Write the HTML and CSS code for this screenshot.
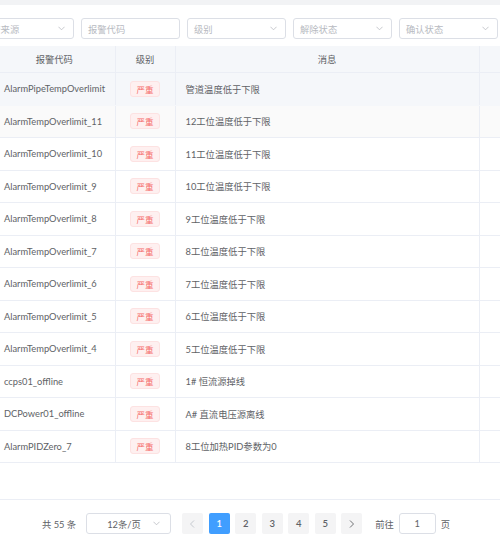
FILE: index.html
```html
<!DOCTYPE html>
<html lang="zh-CN">
<head>
    <meta charset="utf-8">
    <link rel="stylesheet" href="styles.css">
</head>
<body>
<div class="topbar"></div>

<div class="filters">
    <div class="field"><span class="ph">报警来源</span><svg class="chev" viewBox="0 0 8 5"><path d="M0.5 0.5L4 4L7.5 0.5"/></svg></div>
    <div class="field"><span class="ph">报警代码</span></div>
    <div class="field"><span class="ph">级别</span><svg class="chev" viewBox="0 0 8 5"><path d="M0.5 0.5L4 4L7.5 0.5"/></svg></div>
    <div class="field"><span class="ph">解除状态</span><svg class="chev" viewBox="0 0 8 5"><path d="M0.5 0.5L4 4L7.5 0.5"/></svg></div>
    <div class="field"><span class="ph">确认状态</span><svg class="chev" viewBox="0 0 8 5"><path d="M0.5 0.5L4 4L7.5 0.5"/></svg></div>
</div>

<div class="tablewrap">
    <table class="alarms">
        <colgroup>
            <col class="c-code">
            <col class="c-level">
            <col class="c-msg">
            <col class="c-op">
        </colgroup>
        <thead>
        <tr><th>报警代码</th><th>级别</th><th>消息</th><th>操作</th></tr>
        </thead>
        <tbody>
        <tr class="hover"><td>AlarmPipeTempOverlimit</td><td class="mid"><span class="tag">严重</span></td><td>管道温度低于下限</td><td></td></tr>
        <tr class="stripe"><td>AlarmTempOverlimit_11</td><td class="mid"><span class="tag">严重</span></td><td>12工位温度低于下限</td><td></td></tr>
        <tr><td>AlarmTempOverlimit_10</td><td class="mid"><span class="tag">严重</span></td><td>11工位温度低于下限</td><td></td></tr>
        <tr><td>AlarmTempOverlimit_9</td><td class="mid"><span class="tag">严重</span></td><td>10工位温度低于下限</td><td></td></tr>
        <tr><td>AlarmTempOverlimit_8</td><td class="mid"><span class="tag">严重</span></td><td>9工位温度低于下限</td><td></td></tr>
        <tr><td>AlarmTempOverlimit_7</td><td class="mid"><span class="tag">严重</span></td><td>8工位温度低于下限</td><td></td></tr>
        <tr><td>AlarmTempOverlimit_6</td><td class="mid"><span class="tag">严重</span></td><td>7工位温度低于下限</td><td></td></tr>
        <tr><td>AlarmTempOverlimit_5</td><td class="mid"><span class="tag">严重</span></td><td>6工位温度低于下限</td><td></td></tr>
        <tr><td>AlarmTempOverlimit_4</td><td class="mid"><span class="tag">严重</span></td><td>5工位温度低于下限</td><td></td></tr>
        <tr><td>ccps01_offline</td><td class="mid"><span class="tag">严重</span></td><td>1# 恒流源掉线</td><td></td></tr>
        <tr><td>DCPower01_offline</td><td class="mid"><span class="tag">严重</span></td><td>A# 直流电压源离线</td><td></td></tr>
        <tr><td>AlarmPIDZero_7</td><td class="mid"><span class="tag">严重</span></td><td>8工位加热PID参数为0</td><td></td></tr>
        </tbody>
    </table>
</div>

<div class="pager">
    <span class="total">共 55 条</span>
    <div class="sizes"><span>12条/页</span><svg class="chev" viewBox="0 0 8 5"><path d="M0.5 0.5L4 4L7.5 0.5"/></svg></div>
    <div class="pages">
        <button class="pbtn disabled"><svg class="arrow" viewBox="0 0 5 8"><path d="M4 0.5L0.5 4L4 7.5"/></svg></button>
        <button class="pbtn active">1</button>
        <button class="pbtn">2</button>
        <button class="pbtn">3</button>
        <button class="pbtn">4</button>
        <button class="pbtn">5</button>
        <button class="pbtn"><svg class="arrow" viewBox="0 0 5 8"><path d="M1 0.5L4.5 4L1 7.5"/></svg></button>
    </div>
    <span class="jump">前往</span>
    <div class="goto">1</div>
    <span class="unit">页</span>
</div>
</body>
</html>
```

FILE: styles.css
```css
html, body {
    margin: 0;
    padding: 0;
    background: #fff;
    overflow: hidden;
}

body {
    font-family: "Lato", "Noto Sans CJK SC", sans-serif;
    font-size: 9.3px;
    color: #606266;
}

.topbar {
    height: 5px;
    background-color: #f2f3f5;
}

/* filter row */
.filters {
    display: flex;
    gap: 7px;
    margin-left: -25px;
    padding-top: 13px;
}

.field {
    flex: none;
    width: 99px;
    height: 21px;
    box-sizing: border-box;
    border: 1px solid #dcdfe6;
    border-radius: 3px;
    display: flex;
    align-items: center;
    justify-content: space-between;
    padding: 0 8px 0 6px;
}

.ph {
    color: #b7bac1;
}

.chev {
    width: 7px;
    height: 5px;
    fill: none;
    stroke: #b7bac1;
    stroke-width: 0.9;
}

/* table */
.tablewrap {
    margin-top: 7px;
    margin-left: -6px;
}

.alarms {
    border-collapse: collapse;
    table-layout: fixed;
    width: 605px;
}

.c-code { width: 121px; }
.c-level { width: 60px; }
.c-msg { width: 304px; }
.c-op { width: 120px; }

.alarms th {
    height: 26.5px;
    padding: 0;
    background-color: #f5f7fa;
    font-weight: normal;
    text-align: center;
    border-bottom: 1px solid #ebeef5;
    border-right: 1px solid #ebeef5;
    box-sizing: border-box;
}

.alarms td {
    height: 32.5px;
    padding: 0 9px 0 10px;
    border-bottom: 1px solid #ebeef5;
    border-right: 1px solid #ebeef5;
    box-sizing: border-box;
    white-space: nowrap;
    overflow: hidden;
}

.alarms td.mid {
    text-align: center;
    padding: 0;
}

.alarms tr.hover td {
    background-color: #f5f7fa;
    border-bottom-color: #f5f7fa;
}

.alarms tr.stripe td {
    background-color: #fafafa;
}

.tag {
    display: inline-block;
    height: 16px;
    line-height: 14px;
    box-sizing: border-box;
    padding: 0 5.5px;
    font-family: "Noto Sans CJK SC", sans-serif;
    font-size: 8.5px;
    color: #f56c6c;
    background-color: #fef0f0;
    border: 1px solid #fde2e2;
    border-radius: 3px;
    vertical-align: middle;
}

/* pagination */
.pager {
    margin-top: 35.5px;
    border-top: 1px solid #ebeef5;
    padding-top: 13.5px;
    padding-left: 42px;
    display: flex;
    align-items: center;
    height: 21px;
}

.total {
    margin-right: 10px;
}

.sizes {
    width: 85px;
    height: 21px;
    box-sizing: border-box;
    border: 1px solid #dcdfe6;
    border-radius: 3px;
    display: flex;
    align-items: center;
    justify-content: space-between;
    padding: 0 10px 0 20px;
    margin-right: 11px;
}

.pages {
    display: flex;
    gap: 5.5px;
}

.pbtn {
    width: 21px;
    height: 21px;
    border: none;
    border-radius: 2px;
    padding: 0;
    background-color: #f4f4f5;
    color: #606266;
    font-family: inherit;
    font-size: 9.5px;
    font-weight: 600;
    display: flex;
    align-items: center;
    justify-content: center;
}

.pbtn.active {
    background-color: #409eff;
    color: #fff;
}

.arrow {
    width: 5px;
    height: 8px;
    fill: none;
    stroke: #606266;
    stroke-width: 0.9;
}

.pbtn.disabled .arrow {
    stroke: #c0c4cc;
}

.jump {
    margin-left: 13px;
}

.goto {
    width: 37px;
    height: 21px;
    box-sizing: border-box;
    border: 1px solid #dcdfe6;
    border-radius: 3px;
    margin: 0 5px;
    display: flex;
    align-items: center;
    justify-content: center;
}
```
